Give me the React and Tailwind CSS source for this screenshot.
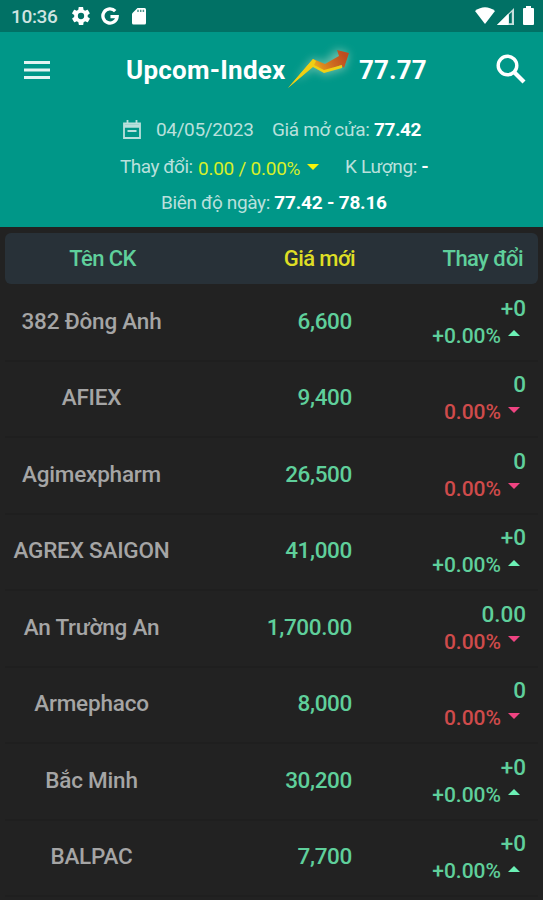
import clsx from "clsx";

const stocks = [
    { name: "382 Đông Anh", price: "6,600", change: "+0", percent: "+0.00%", up: true },
    { name: "AFIEX", price: "9,400", change: "0", percent: "0.00%", up: false },
    { name: "Agimexpharm", price: "26,500", change: "0", percent: "0.00%", up: false },
    { name: "AGREX SAIGON", price: "41,000", change: "+0", percent: "+0.00%", up: true },
    { name: "An Trường An", price: "1,700.00", change: "0.00", percent: "0.00%", up: false },
    { name: "Armephaco", price: "8,000", change: "0", percent: "0.00%", up: false },
    { name: "Bắc Minh", price: "30,200", change: "+0", percent: "+0.00%", up: true },
    { name: "BALPAC", price: "7,700", change: "+0", percent: "+0.00%", up: true },
];

const StatusBar = () => (
    <div className="h-[32px] shrink-0 bg-[#017165] flex items-center justify-between pl-[11px] pr-[9px] text-white">
        <div className="flex items-center">
            <span className="w-[61px] text-[19px] leading-none tracking-[-0.35px] font-medium text-[#cfe4e1]">10:36</span>
            <svg viewBox="2 2 20 20" className="w-[18px] h-[18px]" fill="currentColor">
                <path d="M19.4 13c0-.3.1-.6.1-1s0-.7-.1-1l2.100-1.600c.2-.2.2-.4.1-.6l-2-3.500c-.1-.2-.4-.3-.6-.2l-2.500 1c-.5-.4-1.100-.7-1.700-1l-.4-2.600c0-.3-.2-.5-.5-.5h-4c-.2 0-.5.2-.5.4l-.4 2.700c-.6.2-1.200.6-1.700 1l-2.500-1c-.2-.1-.5 0-.6.2l-2 3.500c-.1.2-.1.5.1.600L4.500 11c0 .3-.1.7-.1 1s0 .7.1 1l-2.100 1.600c-.2.2-.2.4-.1.6l2 3.500c.1.2.4.3.6.2l2.500-1c.5.4 1.100.7 1.700 1l.4 2.600c0 .3.3.5.5.5h4c.3 0 .5-.2.5-.4l.4-2.700c.6-.2 1.200-.6 1.700-1l2.500 1c.2.1.5 0 .6-.2l2-3.500c.1-.2.1-.5-.1-.6L19.400 13zM12 15.500a3.500 3.500 0 1 1 0-7 3.500 3.500 0 0 1 0 7z" />
            </svg>
            <svg viewBox="0 0 20 20" className="w-[18px] h-[18px] ml-[11px]" fill="none" stroke="currentColor" strokeWidth="3.700">
                <path d="M15.800 4.500A7.900 7.900 0 1 0 17.900 10.600H10.500" />
            </svg>
            <svg viewBox="0 0 14 18" className="w-[14px] h-[18px] ml-[13px]">
                <path d="M5.500 1H12.500Q14 1 14 2.500V16Q14 17.500 12.500 17.500H1.500Q0 17.500 0 16V6.500z" fill="currentColor" />
                <path d="M6 2.800V5M8.700 2.800V5M11.400 2.800V5" stroke="#4d958c" strokeWidth="1.500" />
            </svg>
        </div>
        <div className="flex items-center">
            <svg viewBox="0 0 20 17" className="w-[20px] h-[17px] -mt-[1px]" fill="currentColor">
                <path d="M0 4Q10-3.500 20 4L10 17z" />
            </svg>
            <svg viewBox="0 0 17 17" className="w-[17px] h-[17px] ml-[2px]">
                <path d="M0 17L17 0V17z" fill="#c9dfdc" />
                <path d="M12 6.500V15.300H14.800V4z" fill="#017165" />
                <path d="M0 17L11.500 5.500V17z" fill="#fff" />
            </svg>
            <svg viewBox="0 0 11 19" className="w-[11px] h-[19px] ml-[9px] -mt-[1px]" fill="currentColor">
                <path d="M3 0H8V2H10Q11 2 11 3V18Q11 19 10 19H1Q0 19 0 18V3Q0 2 1 2H3z" />
            </svg>
        </div>
    </div>
);

const TrendArrow = () => (
    <svg viewBox="0 0 64 42" className="w-[64px] h-[42px] overflow-visible">
        <defs>
            <linearGradient id="arrow" gradientUnits="userSpaceOnUse" x1="26" y1="22" x2="56" y2="4">
                <stop offset="0" stopColor="#f0c818" />
                <stop offset=".3" stopColor="#de8a1e" />
                <stop offset=".6" stopColor="#cc6a20" />
                <stop offset="1" stopColor="#bd4c20" />
            </linearGradient>
            <filter id="glow" x="-30%" y="-30%" width="160%" height="160%">
                <feGaussianBlur stdDeviation="4" />
            </filter>
        </defs>
        <path d="M8 32L26 9L37 13L50 0L62 4L58 20L38 26L27 20z" fill="#a9d6c0" opacity=".6" filter="url(#glow)" />
        <path d="M1 39L26 10L38 15L52 7L50 1L62 4L57 19L54 16L37 23L26 17z" fill="url(#arrow)" />
        <path d="M1 39L26 10L29 12L27 16L37 21L55 16L55 19L37 24L26 18z" fill="#f0cf14" />
    </svg>
);

const AppBar = () => (
    <div className="h-[75px] flex items-center px-[24px] text-white">
        <svg viewBox="0 0 26 18" className="w-[26px] h-[18px]" fill="#e4f4f2">
            <path d="M0 0H26V3H0zM0 7.500H26V10.500H0zM0 15H26V18H0z" />
        </svg>
        <div className="flex items-center ml-[76px] text-[26px] font-bold leading-none">
            <span className="w-[161px] whitespace-nowrap tracking-[0.25px]">Upcom-Index</span>
            <TrendArrow />
            <span className="ml-[8px] tracking-[0.1px]">77.77</span>
        </div>
        <svg viewBox="0 0 30 30" className="w-[30px] h-[30px] ml-auto -mr-[7px] -mt-[2px]" fill="none" stroke="currentColor">
            <circle cx="11.500" cy="11.500" r="9.300" strokeWidth="3.400" />
            <path d="M18 18L28 28" strokeWidth="4.200" />
        </svg>
    </div>
);

const Summary = () => (
    <div className="text-[19px] leading-[37px] tracking-[-0.36px] text-[#b9e0dc] whitespace-nowrap">
        <div className="h-[39px] flex items-center pl-[123px] pt-[5px]">
            <svg viewBox="0 0 18 19" className="w-[18px] h-[19px]" fill="none" stroke="currentColor" strokeWidth="1.800">
                <path d="M1 3.500H17V18H1z" />
                <path d="M1 6H17" strokeWidth="3.500" />
                <path d="M4.500 0V4M13.500 0V4M4.500 11H13.500" />
            </svg>
            <span className="ml-[15px] w-[116px]">04/05/2023</span>
            <span>Giá mở cửa: <b className="text-white tracking-[-0.4px]">77.42</b></span>
        </div>
        <div className="h-[38px] flex items-center pl-[120px] pt-[3px]">
            <span className="w-[78px] tracking-[-0.5px]">Thay đổi:</span>
            <span className="w-[103px] text-[#d7f02a] tracking-[-0.25px] pt-[4px]">0.00 / 0.00%</span>
            <svg viewBox="0 0 12 6" className="w-[12px] h-[6px] ml-[6px]" fill="#f5f50a">
                <path d="M0 0H12L6 6z" />
            </svg>
            <span className="ml-[26px]">K Lượng: <b className="text-white">-</b></span>
        </div>
        <div className="h-[37px] pl-[161px]">
            Biên độ ngày: <b className="text-white tracking-[-0.2px]">77.42 - 78.16</b>
        </div>
    </div>
);

const StockRow = ({ stock }) => (
    <div className="h-[76.5px] shrink-0 flex items-center border-b-2 border-[#1f1f1f] text-[22.500px] font-medium leading-[28px] text-[#5fcf9b]">
        <div className="w-[173px] pb-[3px] text-center text-[#a5a5a5] tracking-[-0.2px] whitespace-nowrap">{stock.name}</div>
        <div className="w-[174px] pb-[3px] text-right tracking-[-0.35px]">{stock.price}</div>
        <div className="flex-1 pr-[12px] pb-px flex flex-col items-end">
            <span>{stock.change}</span>
            <div className="flex items-center pr-[6px] text-[21px]">
                <span className={clsx(!stock.up && "text-[#cf4b4b]")}>{stock.percent}</span>
                <svg
                    viewBox="0 0 12 6"
                    className={clsx("w-[12px] h-[6px] ml-[7px] mb-[5px]", stock.up ? "text-[#6bf0b5]" : "text-[#f04482] rotate-180")}
                    fill="currentColor"
                >
                    <path d="M6 0L12 6H0z" />
                </svg>
            </div>
        </div>
    </div>
);

const App = () => {
    return (
        <div className="w-full h-[900px] overflow-hidden flex flex-col bg-[#222222] font-['Roboto','Noto_Sans',sans-serif]">
            <StatusBar />
            <div className="h-[195px] shrink-0 bg-[#009788]">
                <AppBar />
                <Summary />
            </div>
            <div className="px-[5px] pt-[6px] flex flex-col">
                <div className="h-[51px] mb-px shrink-0 rounded-[6px] bg-[#283138] flex items-center text-[22px] tracking-[-0.6px] font-medium text-[#5fcf9b]">
                    <div className="w-[195px] text-center">Tên CK</div>
                    <div className="w-[155px] text-right text-[#dede25]">Giá mới</div>
                    <div className="flex-1 text-right pr-[15px]">Thay đổi</div>
                </div>
                {stocks.map((stock) => (
                    <StockRow key={stock.name} stock={stock} />
                ))}
            </div>
        </div>
    );
};

export default App;
